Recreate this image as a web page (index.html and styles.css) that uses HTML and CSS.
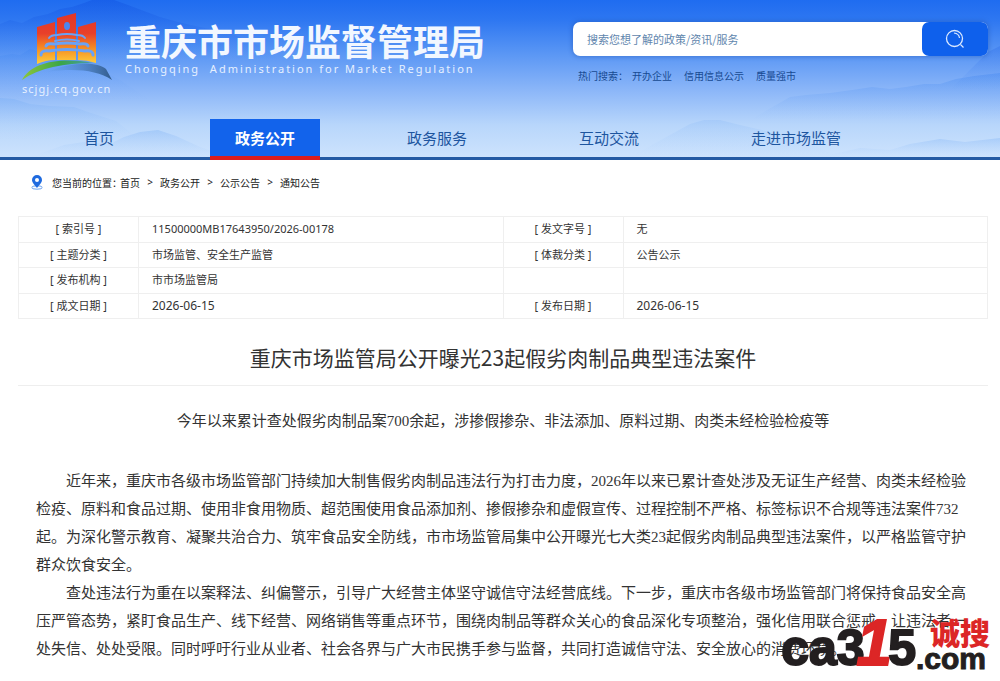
FILE: index.html
```html
<!DOCTYPE html>
<html lang="zh-CN">
<head>
<meta charset="utf-8">
<meta name="viewport" content="width=device-width, initial-scale=1">
<title>重庆市市场监督管理局</title>
<link rel="stylesheet" href="styles.css">
</head>
<body>
<div class="page">
  <header class="site-header">
    <svg class="hills" viewBox="0 0 1000 157" preserveAspectRatio="none" aria-hidden="true">
      <defs>
        <linearGradient id="h1" x1="0" y1="0" x2="0" y2="1"><stop offset="0" stop-color="#0f4fe0" stop-opacity=".42"/><stop offset="1" stop-color="#2f78f0" stop-opacity="0"/></linearGradient>
        <linearGradient id="h2" x1="0" y1="0" x2="0" y2="1"><stop offset="0" stop-color="#3f85f0" stop-opacity=".36"/><stop offset="1" stop-color="#7fb0f8" stop-opacity="0"/></linearGradient>
        <linearGradient id="h3" x1="0" y1="0" x2="0" y2="1"><stop offset="0" stop-color="#6fa8f4" stop-opacity=".3"/><stop offset="1" stop-color="#a8ccfa" stop-opacity="0"/></linearGradient>
      </defs>
      <path fill="url(#h1)" d="M0 24 10 20 22 23 34 17 48 14 60 9 72 7 84 3 92 0H114L128 5 144 11 160 17 178 22 200 27 230 33 260 46 280 60H0Z"/>
      <path fill="url(#h2)" d="M0 56 12 54 20 55 30 49 42 52 60 56 90 64 120 80 150 100H0Z"/>
      <path fill="url(#h3)" d="M0 98 14 99 30 104 50 106 74 107 88 112 116 121 140 140H0Z"/>
      <path fill="url(#h3)" d="M30 157 64 145 84 142 110 144 124 137 140 132 158 130 176 136 200 147 230 157Z"/>
      <path fill="url(#h2)" d="M750 120 790 97 806 95 830 93 852 90 872 87 890 89 906 87 924 84 940 84 956 79 974 76 1000 73V120Z"/>
      <path fill="url(#h1)" opacity=".5" d="M950 90 988 52 1000 46V90Z"/>
      <path fill="url(#h3)" opacity=".6" d="M630 157 690 124 704 120 720 120 740 125 770 132 800 140 840 157Z"/>
      <path fill="url(#h3)" d="M820 157 860 148 890 150 910 144 940 139 965 142 1000 138V157Z"/>
    </svg>
    <div class="header-top">
      <a class="brand" href="#">
        <span class="brand-mark">
          <svg class="emblem" viewBox="0 0 90 70" role="img" aria-label="徽标">
            <defs>
              <linearGradient id="fire" x1="0" y1="0" x2="0" y2="1"><stop offset="0" stop-color="#e23726"/><stop offset=".4" stop-color="#e8402a"/><stop offset=".68" stop-color="#f58a22"/><stop offset="1" stop-color="#ffcf3c"/></linearGradient>
              <linearGradient id="leaf" x1="0" x2="1"><stop offset="0" stop-color="#8cc63c"/><stop offset=".55" stop-color="#3aa548"/><stop offset="1" stop-color="#4b9ab0"/></linearGradient>
              <linearGradient id="river" x1="0" x2="1"><stop offset="0" stop-color="#5a96dd" stop-opacity=".1"/><stop offset="1" stop-color="#315b8c"/></linearGradient>
            </defs>
            <path fill="url(#fire)" d="M15 17 33 12V50Q24 50 15 54ZM35 8 54 3V50H35ZM56 17 74 12V53Q65 50 56 50Z"/>
            <ellipse cx="45" cy="16" rx="3" ry="4" fill="#4c86ee"/>
            <g fill="none" stroke="#6aa2f6" stroke-linecap="round">
              <path stroke-width="2" d="M27 28Q29 25 35 25 45 23 55 25 61 25 63 28"/>
              <path stroke-width="2" d="M33 31Q45 28 57 31"/>
              <path stroke-width="3" d="M24 36Q25 33 32 34 45 32 58 34 65 33 66 36"/>
              <path stroke-width="3" d="M19 45Q19 40 27 41 45 38 63 41 71 40 71 45"/>
            </g>
            <path fill="url(#leaf)" d="M0 70C10 52 38 47 71 53 42 53 17 58 0 70Z"/>
            <path fill="url(#river)" d="M25 62C47 52 75 51 84 59L90 70C75 60 52 58 25 62Z"/>
          </svg>
          <span class="brand-domain">scjgj.cq.gov.cn</span>
        </span>
        <span class="brand-text">
          <span class="brand-name">重庆市市场监督管理局</span>
          <span class="brand-en">Chongqing&nbsp; Administration for Market Regulation</span>
        </span>
      </a>
      <div class="search">
        <form class="search-box" role="search">
          <input class="search-input" type="text" aria-label="搜索" placeholder="搜索您想了解的政策/资讯/服务">
          <button class="search-button" type="button" aria-label="搜索">
            <svg viewBox="0 0 20 20" width="20" height="20" fill="none" stroke="#dbe9ff" aria-hidden="true"><circle cx="9.500" cy="9.500" r="8" stroke-width="1.300"/><path stroke-width="1.200" d="M9 4Q14 4.500 14.500 9M15.500 15.500 18.500 18.500"/></svg>
          </button>
        </form>
        <div class="hot">
          <span>热门搜索：</span>
          <a href="#">开办企业</a>
          <a href="#">信用信息公示</a>
          <a href="#">质量强市</a>
        </div>
      </div>
    </div>
    <nav class="nav" aria-label="主导航">
      <a class="nav-home" href="#">首页</a>
      <a class="active" href="#" aria-current="page">政务公开</a>
      <a href="#">政务服务</a>
      <a href="#">互动交流</a>
      <a href="#">走进市场监管</a>
    </nav>
  </header>

  <main class="content">
    <nav class="crumbs" aria-label="当前位置">
      <svg viewBox="0 0 12 15" width="12" height="15" aria-hidden="true"><ellipse cx="6" cy="12.500" rx="5.300" ry="1.700" fill="none" stroke="#6ba2ee"/><path fill="#1e6adf" fill-rule="evenodd" d="M6 0A5 5 0 0 1 11 5C11 8 8 10 6 13 4 10 1 8 1 5A5 5 0 0 1 6 0ZM6 3A2 2 0 1 0 6 7 2 2 0 0 0 6 3Z"/></svg>
      <span class="crumbs-label">您当前的位置：</span>
      <a href="#">首页</a><span class="sep">&gt;</span><a href="#">政务公开</a><span class="sep">&gt;</span><a href="#">公示公告</a><span class="sep">&gt;</span><a href="#">通知公告</a>
    </nav>

    <table class="meta">
      <colgroup><col class="col-key"><col><col class="col-key"><col></colgroup>
      <tbody>
        <tr><th scope="row">[ 索引号 ]</th><td>11500000MB17643950/2026-00178</td><th scope="row">[ 发文字号 ]</th><td>无</td></tr>
        <tr><th scope="row">[ 主题分类 ]</th><td>市场监管、安全生产监管</td><th scope="row">[ 体裁分类 ]</th><td>公告公示</td></tr>
        <tr><th scope="row">[ 发布机构 ]</th><td>市市场监管局</td><td></td><td></td></tr>
        <tr><th scope="row">[ 成文日期 ]</th><td class="date">2026-06-15</td><th scope="row">[ 发布日期 ]</th><td class="date">2026-06-15</td></tr>
      </tbody>
    </table>

    <article>
      <h1 class="title">重庆市场监管局公开曝光23起假劣肉制品典型违法案件</h1>
      <p class="subtitle">今年以来累计查处假劣肉制品案700余起，涉掺假掺杂、非法添加、原料过期、肉类未经检验检疫等</p>
      <div class="body-text">
        <p>近年来，重庆市各级市场监管部门持续加大制售假劣肉制品违法行为打击力度，2026年以来已累计查处涉及无证生产经营、肉类未经检验检疫、原料和食品过期、使用非食用物质、超范围使用食品添加剂、掺假掺杂和虚假宣传、过程控制不严格、标签标识不合规等违法案件732起。为深化警示教育、凝聚共治合力、筑牢食品安全防线，市市场监管局集中公开曝光七大类23起假劣肉制品典型违法案件，以严格监管守护群众饮食安全。</p>
        <p>查处违法行为重在以案释法、纠偏警示，引导广大经营主体坚守诚信守法经营底线。下一步，重庆市各级市场监管部门将保持食品安全高压严管态势，紧盯食品生产、线下经营、网络销售等重点环节，围绕肉制品等群众关心的食品深化专项整治，强化信用联合惩戒，让违法者一处失信、处处受限。同时呼吁行业从业者、社会各界与广大市民携手参与监督，共同打造诚信守法、安全放心的消费环境。</p>
      </div>
    </article>
  </main>

  <div class="watermark">
    <span class="wm-main"><span>ca3</span><span class="wm-one">1</span><span>5</span></span>
    <span class="wm-side"><span class="wm-cn">诚搜</span><span class="wm-com">.com</span></span>
  </div>
</div>
</body>
</html>
```
FILE: styles.css
```css
* { box-sizing: border-box; }

body {
  margin: 0;
  background: #fff;
  color: #333;
  font-family: "Noto Sans", "Noto Sans CJK SC", sans-serif;
}

a { color: inherit; text-decoration: none; }

.page { position: relative; min-height: 100vh; }

/* Header */
.site-header {
  position: relative;
  background: linear-gradient(#1f6cf0 0, #2e77f1 20px, #5593f4 50px, #8bb6f8 90px, #b8d6fb 125px, #cde3fd 157px);
  border-bottom: 3px solid #245aa3;
}

.hills { position: absolute; inset: 0; width: 100%; height: 100%; }

.header-top {
  position: relative;
  display: flex;
  justify-content: space-between;
  align-items: flex-start;
  height: 119px;
  padding: 10px 12px 0 22px;
}

.brand { display: flex; gap: 12px; color: #f2f7ff; }
.brand-mark { display: flex; flex-direction: column; width: 91px; }
.emblem { width: 90px; height: 70px; }
.brand-domain { font-size: 11px; line-height: 18px; letter-spacing: 1px; white-space: nowrap; color: #e6f0ff; }
.brand-text { display: flex; flex-direction: column; padding-top: 9px; white-space: nowrap; }
.brand-name { font-family: "Noto Sans CJK SC", sans-serif; font-size: 36px; line-height: 42px; font-weight: 700; }
.brand-en { font-size: 11px; line-height: 16px; letter-spacing: 2px; color: #e6f0ff; }

.search { width: 415px; padding-top: 12px; }
.search-box {
  display: flex;
  height: 34px;
  border-radius: 7px;
  background: #fff;
  box-shadow: 0 0 4px 1px rgba(30, 85, 180, .45);
}
.search-input {
  flex: 1;
  min-width: 0;
  padding: 0 14px;
  border: 0;
  border-radius: 7px;
  background: transparent;
  font: 11px "Noto Sans CJK SC", sans-serif;
}
.search-input::placeholder { color: #6186ad; opacity: 1; }
.search-button {
  display: flex;
  align-items: center;
  justify-content: center;
  width: 66px;
  padding: 0;
  border: 0;
  border-radius: 7px;
  background: #0e60ec;
}
.hot { display: flex; gap: 12px; padding: 12px 5px 0; font-size: 10px; line-height: 16px; color: #174a92; }
.hot span { margin-right: -8px; }

.nav {
  position: relative;
  display: flex;
  gap: 62px;
  padding-left: 59px;
  height: 38px;
  font-size: 15px;
  line-height: 38px;
  color: #1d559f;
}
.nav a { padding: 0 25px; white-space: nowrap; height: 38px; }
.nav .nav-home { margin-right: 9px; }
.nav .active { height: 41px; border-bottom: 4px solid #dc1c1c; background: #1263eb; color: #fff; font-weight: 700; }

/* Content */
.content { padding: 0 12px 18px 18px; }

.crumbs { display: flex; align-items: center; height: 44px; padding-left: 13px; font-size: 10px; color: #222; }
.crumbs-label { margin: 0 -2px 0 9px; }
.sep { width: 20px; text-align: center; }

.meta {
  width: 100%;
  height: 103px;
  margin-top: 12px;
  border-collapse: collapse;
  table-layout: fixed;
  font-size: 11px;
  line-height: 16px;
}
.col-key { width: 120px; }
.meta th, .meta td { padding: 0; border: 1px solid #efefef; font-weight: 400; }
.meta td { padding-left: 13px; }
.meta .date { font-size: 12px; }

.title {
  margin: 0;
  padding: 22px 0 12px;
  border-bottom: 1px solid #eee;
  font-size: 21px;
  line-height: 32px;
  font-weight: 400;
  text-align: center;
  font-family: "Noto Sans CJK SC", sans-serif;
}
.subtitle, .body-text {
  font-family: "Liberation Serif", "Noto Sans CJK SC", serif;
  font-size: 15px;
  line-height: 28px;
}
.subtitle { margin: 21px 0 32px; text-align: center; }
.body-text { padding: 0 16px 0 18px; }
.body-text p { margin: 0; text-indent: 2em; }

/* Watermark logo over the lower right corner */
.watermark {
  position: absolute;
  right: 10px;
  bottom: 8px;
  display: flex;
  align-items: flex-end;
  color: #231f20;
  font-family: "Liberation Sans", sans-serif;
  font-weight: 700;
  pointer-events: none;
}
.wm-main { display: flex; align-items: baseline; font-size: 50px; line-height: 50px; -webkit-text-stroke: 2px currentColor; }
.wm-one { margin: 0 -4px 0 -8px; color: #dc2626; font-size: 64px; font-style: italic; }
.wm-side { display: flex; flex-direction: column; width: 74px; }
.wm-cn { color: #dc2626; font: 900 30px/28px "Noto Sans CJK SC", sans-serif; text-align: right; }
.wm-com { font-size: 30px; line-height: 28px; -webkit-text-stroke: 1px currentColor; }
```
